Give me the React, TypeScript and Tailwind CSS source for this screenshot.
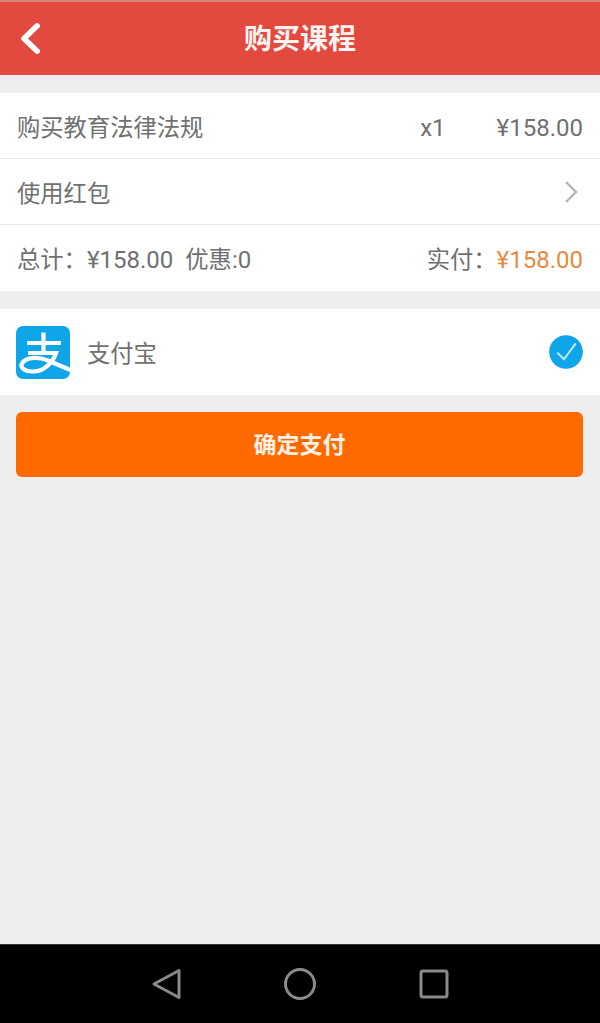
import React from 'react';

const fontStack = "font-['Roboto','Noto_Sans_CJK_SC',sans-serif]";

function AlipayLogo() {
  return (
    <svg width="54" height="54" viewBox="0 0 54 54" className="mt-[1px] shrink-0">
      <defs>
        <clipPath id="logo-clip">
          <rect width="54" height="53" rx="7" />
        </clipPath>
      </defs>
      <rect width="54" height="53" rx="7" fill="#0ea5e9" />
      <g fill="none" stroke="#fff" strokeWidth="4.2" clipPath="url(#logo-clip)">
        <path d="M11 17H45" />
        <path d="M27.5 6.5V27" />
        <path d="M12 27H40C37 36 28 46 16 45.5C8 45 4 41.5 6 37.5C9 31.5 21 30 32 34.5C40 38 47 41 56 44.5" />
      </g>
    </svg>
  );
}

export default function App() {
  return (
    <div className={`flex h-[1023px] w-[600px] flex-col bg-[#eeeeee] ${fontStack}`}>
      <header className="relative flex h-[75px] shrink-0 items-center justify-center border-t-2 border-[#d48478] bg-[#e2493f] pt-[2px]">
        <svg width="26" height="36" viewBox="0 0 26 36" className="absolute left-[18px] top-[18px]">
          <path d="M19.2 5.8L6 18.5L19.2 31.2" fill="none" stroke="#fff" strokeWidth="5.5" strokeLinecap="round" strokeLinejoin="round" />
        </svg>
        <h1 className="text-[28px] font-bold leading-none text-[#fdf3f0]">购买课程</h1>
      </header>

      <section className="mt-[18px] bg-white text-[23.3px] text-[#707070]">
        <div className="flex h-[66px] items-center justify-between border-b border-[#e8e8e8] px-[17px] pt-[5px]">
          <span>购买教育法律法规</span>
          <div className="flex items-center gap-[51px] text-[24px]">
            <span>x1</span>
            <span>¥158.00</span>
          </div>
        </div>
        <div className="flex h-[66px] items-center justify-between border-b border-[#e8e8e8] px-[17px] pt-[5px]">
          <span>使用红包</span>
          <svg width="16" height="24" viewBox="0 0 16 24" className="mr-[4px] -mt-[5px]">
            <path d="M3 2L13 12L3 22" fill="none" stroke="#b5b5b5" strokeWidth="2.4" />
          </svg>
        </div>
        <div className="flex h-[66px] items-center justify-between px-[17px] pt-[3px]">
          <div className="flex gap-[12px]">
            <span>
              总计：<span className="text-[24px]">¥158.00</span>
            </span>
            <span>
              优惠<span className="text-[24px]">:0</span>
            </span>
          </div>
          <div>
            <span>实付：</span>
            <span className="text-[24px] text-[#e88a3c]">¥158.00</span>
          </div>
        </div>
      </section>

      <section className="mt-[18px] flex h-[86px] items-center bg-white pl-[16px] pr-[17px]">
        <AlipayLogo />
        <span className="ml-[17px] pt-[5px] text-[23.3px] text-[#707070]">支付宝</span>
        <svg width="34" height="34" viewBox="0 0 34 34" className="ml-auto">
          <circle cx="17" cy="17" r="16.8" fill="#0ea5e9" />
          <path d="M8.3 17.7L15 24.3L26.7 8.3" fill="none" stroke="#bdebff" strokeWidth="2" />
        </svg>
      </section>

      <button className="ml-[16px] mr-[17px] mt-[17px] flex h-[65px] shrink-0 items-center justify-center rounded-[6px] bg-[#ff6a00] pt-[4px] text-[23px] font-bold text-[#fdf1e6]">
        确定支付
      </button>

      <nav className="mt-auto flex h-[79px] shrink-0 items-center justify-center gap-[88px] border-t border-[#333] bg-black">
        <svg width="46" height="46" viewBox="0 0 46 46">
          <path d="M36 9.5V36.5L11 23Z" fill="none" stroke="#8a8a8a" strokeWidth="3" strokeLinejoin="round" />
        </svg>
        <svg width="46" height="46" viewBox="0 0 46 46">
          <circle cx="23" cy="23" r="14.5" fill="none" stroke="#8a8a8a" strokeWidth="3" />
        </svg>
        <svg width="46" height="46" viewBox="0 0 46 46">
          <rect x="10" y="10" width="26" height="26" rx="2" fill="none" stroke="#8a8a8a" strokeWidth="3" />
        </svg>
      </nav>
    </div>
  );
}
